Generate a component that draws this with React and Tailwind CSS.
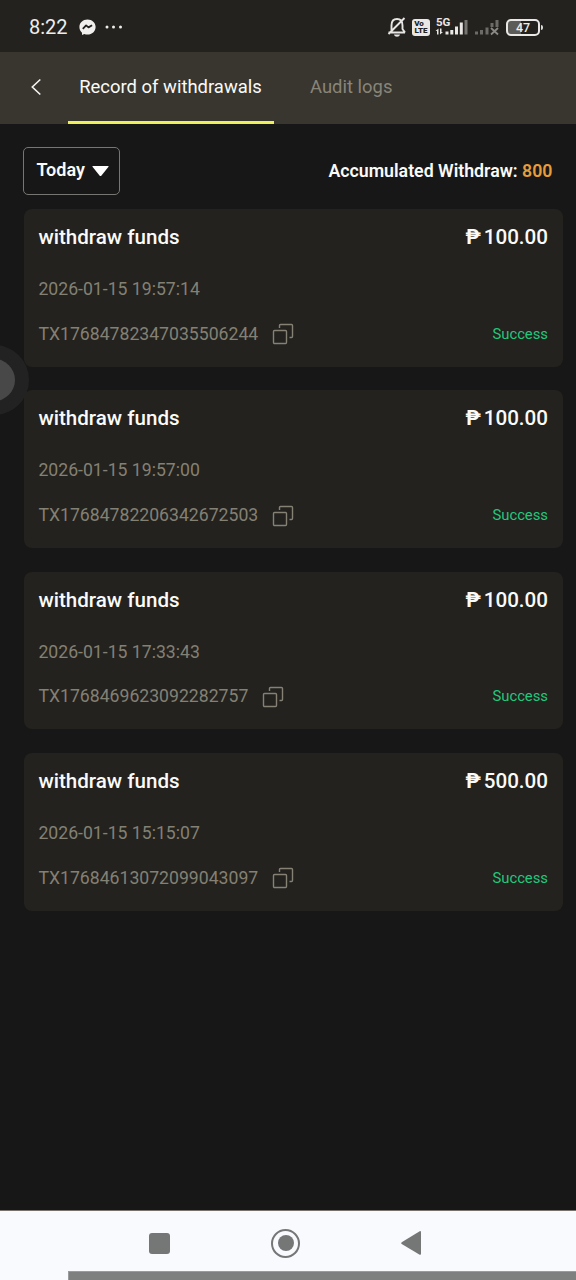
import React from "react";

const records = [
  { id: "TX17684782347035506244", date: "2026-01-15 19:57:14", amount: "100.00" },
  { id: "TX17684782206342672503", date: "2026-01-15 19:57:00", amount: "100.00" },
  { id: "TX1768469623092282757", date: "2026-01-15 17:33:43", amount: "100.00" },
  { id: "TX17684613072099043097", date: "2026-01-15 15:15:07", amount: "500.00" },
];

function StatusBar() {
  return (
    <div className="flex h-[52px] shrink-0 items-center bg-[#23221e] pt-[2px] pl-[29px] text-[#eeedeb]">
      <span className="w-[50px] pt-px text-[20px] leading-[49px] whitespace-nowrap">8:22</span>
      <svg className="h-[17px] w-[17px]" viewBox="0 0 17 17">
        <path d="M8.500.4C3.900.4.4 3.700.4 8c0 2.300 1 4.300 2.600 5.700V16l2.300-1c1 .4 2.100.6 3.200.6 4.600 0 8.100-3.300 8.100-7.600S13.100.4 8.500.4Z" fill="#f1f0ee" />
        <path d="m3.800 9.900 3.300-3.500 2.400 2 3.600-2.100" fill="none" stroke="#23221e" strokeWidth="1.800" strokeLinejoin="round" />
      </svg>
      <svg className="ml-[9px] h-[6px] w-[18px]" viewBox="0 0 18 6" fill="#eeedeb">
        <circle cx="2" cy="3" r="1.500" /><circle cx="8.500" cy="3" r="1.500" /><circle cx="15.500" cy="3" r="1.500" />
      </svg>
      <svg className="ml-[264px] h-[22px] w-[20px]" viewBox="0 0 20 22" fill="none" stroke="#e7e6e4" strokeWidth="1.900">
        <path d="M1.500 16.500h16.500M4.500 16V9.500C4.500 5.500 6.500 3 10 3s5.500 2.500 5.500 6.500V13l2.500 3.500M17.500 2 1.500 18" />
        <path d="M7 18.500h6c-.7 3-5.300 3-6 0Z" fill="#e7e6e4" stroke="none" />
      </svg>
      <div className="ml-[5px] flex h-[17px] w-[18px] flex-col items-center justify-center rounded-[3px] bg-[#e9e8e6] text-[8px] leading-[7px] font-black text-[#23221e]">
        <span className="-ml-1">Vo</span><span>LTE</span>
      </div>
      <svg className="-mt-[4px] ml-[5px] h-[24px] w-[34px]" viewBox="0 -4 34 24">
        <text x="1" y="8.800" fontSize="11.500" fontWeight="700" fill="#e9e8e6">5G</text>
        <g fill="#e9e8e6">
          <path d="M3.500 11.500v6H2V14H.5l3-2.500ZM5 11.500h1.500V15H8l-3 2.500v-6Z" />
          <path d="M10.500 14.500h3v3h-3zM15.300 13h3v4.500h-3zM20 9.500h3v8h-3zM24.800 5.500h3v12h-3z" />
        </g>
        <path d="M29.500 3h3v14.500h-3z" fill="#777572" />
      </svg>
      <svg className="ml-[6px] h-[20px] w-[26px]" viewBox="0 0 26 20" fill="#6d6b68">
        <path d="M0 14.500h3v3H0zM5 13h3v4.500H5zM10.500 10.500h3v7h-3zM15.500 6h3v4h-3zM20.500 3h3v7h-3z" />
        <path d="m16 11 7 6.500m0-6.500-7 6.500" stroke="#8b8986" strokeWidth="1.800" />
      </svg>
      <div className="ml-[5px] flex h-[17px] w-[34px] items-center justify-center rounded-[5px] border-2 border-[#e9e8e6] bg-linear-to-r from-[#5d5b58] from-45% to-[#23221e] to-45% text-[12.500px] leading-[13px] font-medium">47</div>
      <i className="ml-px h-[5px] w-[2px] rounded-r bg-[#d9d8d6]" />
    </div>
  );
}

function CopyIcon() {
  return (
    <svg className="h-[22px] w-[22px]" viewBox="0 0 22 22" fill="none" stroke="#858174" strokeWidth="1.400">
      <rect x="1.500" y="7.500" width="13" height="13" rx="1" />
      <path d="M7.500 5V2.500a1 1 0 0 1 1-1h11a1 1 0 0 1 1 1v11a1 1 0 0 1-1 1H17.500" />
    </svg>
  );
}

function RecordCard({ record }) {
  return (
    <article className="h-[157.700px] rounded-[8px] bg-[#23221e] pr-[15px] pl-[14.400px]">
      <div className="flex h-[56px] items-center justify-between pt-[0.600px] text-[20.600px] font-medium text-[#fafaf8]">
        <h2>withdraw funds</h2>
        <div className="flex gap-[3px]"><span className="font-bold">₱</span><span>{record.amount}</span></div>
      </div>
      <p className="h-[47px] text-[17.650px] leading-[49.500px] text-[#838074]">{record.date}</p>
      <div className="flex h-[43px] items-center pt-[0.500px] text-[17.650px] text-[#838074]">
        <span>{record.id}</span>
        <span className="mt-px ml-[14px]"><CopyIcon /></span>
        <span className="ml-auto text-[14.800px] text-[#23c77d]">Success</span>
      </div>
    </article>
  );
}

export default function App() {
  return (
    <div className="relative flex h-[1280px] w-[576px] flex-col overflow-hidden bg-[#171717] font-['Roboto',sans-serif]">
      <StatusBar />
      <header className="flex h-[72px] shrink-0 bg-[#393630] text-[18.450px]">
        <button className="flex w-[68px] items-center pl-[31px]">
          <svg className="mb-[3px] h-[18px] w-[11px]" viewBox="0 0 11 18" fill="none" stroke="#f5f4f0" strokeWidth="1.600"><path d="M9.300 1.500 1.300 9l8 7.500" /></svg>
        </button>
        <button className="h-[72px] w-[206px] border-b-[3px] border-[#edf05b] pt-[3px] pr-px text-[#fafaf8]">Record of withdrawals</button>
        <button className="ml-[36px] h-[69px] pt-[3px] text-[#88857a]">Audit logs</button>
      </header>
      <main className="flex-1 pr-[13px] pl-[24px]">
        <div className="flex h-[85px] items-start justify-between pt-[23px] pr-[10.500px]">
          <button className="-ml-[0.600px] flex h-[48px] w-[97px] items-center justify-between rounded-[5px] border border-[#777673] pr-[10px] pb-[3px] pl-[12px] text-[18px] font-semibold text-[#fafaf8]">
            Today
            <svg className="mt-[3px] h-[12px] w-[17px]" viewBox="0 0 17 12" fill="#fff"><path d="M1 1h15q1 0 .5.800L9.500 10.500q-1 1-2 0L.5 1.800Q0 1 1 1Z" /></svg>
          </button>
          <p className="text-[17.750px] leading-[48px] font-semibold text-[#fafaf8]">Accumulated Withdraw: <span className="text-[#e99c38]">800</span></p>
        </div>
        <div className="flex flex-col gap-[23.700px]">
          {records.map((record) => <RecordCard key={record.id} record={record} />)}
        </div>
      </main>
      <div className="absolute top-[345px] left-[-41px] flex h-[70px] w-[70px] items-center justify-center rounded-full bg-[#252525]/80">
        <span className="h-[42px] w-[42px] rounded-full bg-[#484848]" />
      </div>
      <nav className="flex h-[70px] shrink-0 flex-col border-t border-[#77706c] bg-[#f9fafe]">
        <div className="flex h-[60px] items-center pt-[4px] pl-[149px]">
          <i className="h-[21px] w-[21px] rounded-[3px] bg-[#757777]" />
          <span className="ml-[101px] flex h-[29px] w-[29px] items-center justify-center rounded-full border-2 border-[#757777]"><i className="h-[16px] w-[16px] rounded-full bg-[#757777]" /></span>
          <svg className="ml-[100px] h-[26px] w-[22px]" viewBox="0 0 22 26" fill="#757777"><path d="M1.700 12.200 19.700 1.200q1.300-.5 1.300 1v21.500q0 1.500-1.300 1L1.700 14q-1.200-.9 0-1.800Z" /></svg>
        </div>
        <div className="ml-[68px] h-[9px] border-t border-l border-[#999b9c] bg-[#7d807f]" />
      </nav>
    </div>
  );
}
